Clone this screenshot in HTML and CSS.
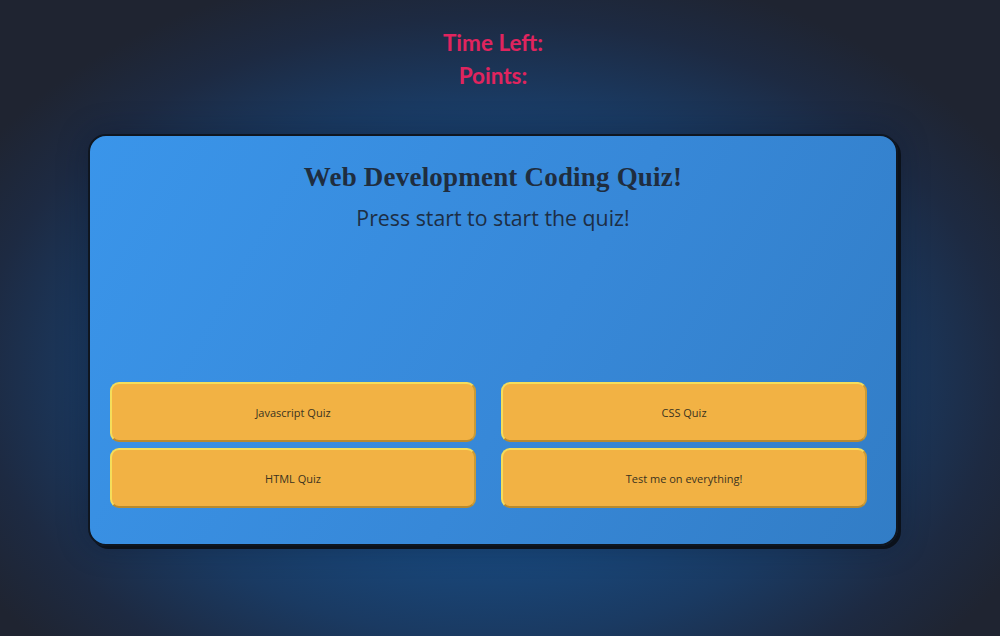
FILE: index.html
```html
<!DOCTYPE html>
<html>
<head>
<meta charset="utf-8">
<link rel="stylesheet" href="styles.css">
</head>
<body>
<header class="stats">
  <div class="stat">Time Left:</div>
  <div class="stat">Points:</div>
</header>
<main class="card">
  <h1 class="title">Web Development Coding Quiz!</h1>
  <p class="subtitle">Press start to start the quiz!</p>
  <div class="choices">
    <button class="choice">Javascript Quiz</button>
    <button class="choice">CSS Quiz</button>
    <button class="choice">HTML Quiz</button>
    <button class="choice">Test me on everything!</button>
  </div>
</main>
</body>
</html>
```
FILE: styles.css
```css
html, body {
  margin: 0;
  height: 100%;
}
body {
  background: radial-gradient(ellipse 60% 65% at 49% 58%, #1a5089 0%, #184a80 40%, #1a3a62 65%, #1d2a42 85%, #1f2431 100%);
  font-family: "Open Sans", "Noto Sans", sans-serif;
  display: flex;
  flex-direction: column;
  overflow: hidden;
}
.stats {
  padding-top: 28px;
  width: 986px;
  display: flex;
  flex-direction: column;
  align-items: center;
  gap: 4px;
}
.stat {
  color: #e0245e;
  font-family: "Lato", "Open Sans", sans-serif;
  font-weight: 700;
  font-size: 22.5px;
  line-height: 29px;
}
.card {
  box-sizing: border-box;
  margin-top: 44px;
  margin-left: 88px;
  width: 810px;
  height: 412px;
  background: linear-gradient(120deg, #3a95ea 0%, #3788d8 55%, #327dc6 100%);
  border: 2px solid #0f1620;
  border-radius: 18px;
  box-shadow: 3px 3px 0 #0b111a, 0 0 30px rgba(10, 20, 40, 0.4);
  padding: 20px 20px 0 20px;
  display: flex;
  flex-direction: column;
  align-items: center;
}
.title {
  margin: 4px 0 0 0;
  font-family: "Liberation Serif", "DejaVu Serif", serif;
  font-weight: 700;
  font-size: 27px;
  color: #1f2d3f;
  letter-spacing: 0.2px;
  line-height: 34px;
}
.subtitle {
  margin: 10px 0 0 0;
  font-family: "Open Sans", sans-serif;
  font-size: 21.3px;
  color: #1d2e45;
  line-height: 28px;
}
.choices {
  margin-top: 150px;
  width: 100%;
  display: grid;
  grid-template-columns: 366px 366px;
  justify-content: space-between;
  column-gap: 23px;
  row-gap: 6px;
  padding-right: 9px;
  box-sizing: border-box;
}
.choice {
  height: 60px;
  background: #f2b244;
  border: 2px solid;
  border-color: #f5dd5a #c99a36 #b88a2e #f5dd5a;
  border-radius: 9px;
  font-family: "Open Sans", sans-serif;
  font-size: 11px;
  color: #3b3220;
  cursor: pointer;
}
```
